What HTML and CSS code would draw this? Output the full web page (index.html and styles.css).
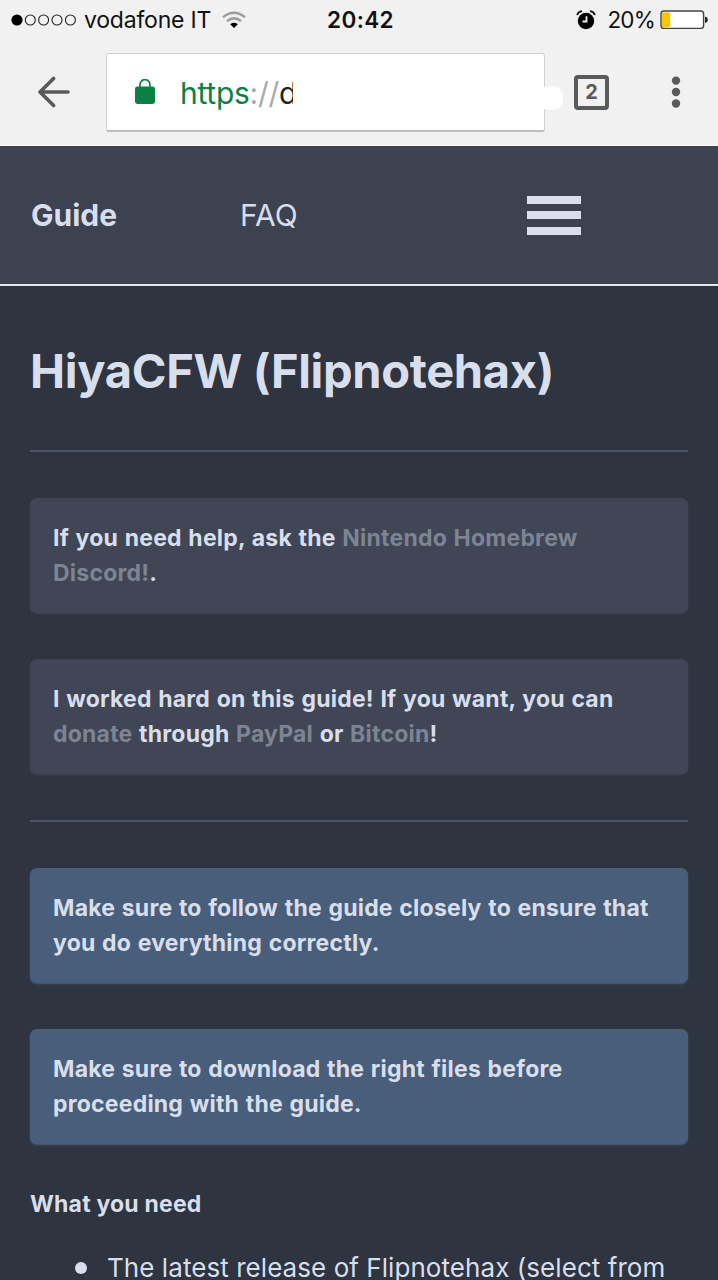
FILE: index.html
```html
<!DOCTYPE html>
<html lang="en">
<head>
<meta charset="utf-8">
<title>HiyaCFW (Flipnotehax)</title>
<link rel="stylesheet" href="styles.css">
</head>
<body>
<div class="screen">
  <header class="chrome">
    <div class="status">
      <div class="status-left">
        <svg class="signal" width="66" height="14" viewBox="0 0 66 14"><circle cx="6" cy="7" r="5.6"/><g fill="none" stroke="#222" stroke-width="1.1"><circle cx="19.3" cy="7" r="5"/><circle cx="32.6" cy="7" r="5"/><circle cx="46" cy="7" r="5"/><circle cx="59.4" cy="7" r="5"/></g></svg>
        <span class="carrier">vodafone IT</span>
        <svg class="wifi" width="24" height="18" viewBox="0 0 24 18"><g fill="none" stroke="#9b9b9b" stroke-width="2.4"><path d="M1 6.3Q12-2.7 23 6.3"/><path d="M5 10.2Q12 4.4 19 10.2"/></g><path d="M8.2 13.3Q12 10.4 15.8 13.3L12 17z"/></svg>
      </div>
      <time class="clock">20:42</time>
      <div class="status-right">
        <svg class="alarm" width="20" height="20" viewBox="0 0 20 20"><circle cx="10" cy="11" r="8.2"/><path d="M1 5Q2.4 1.7 6 1.2M19 5Q17.6 1.7 14 1.2" fill="none" stroke="#111" stroke-width="1.8"/><path d="M10.5 6.3V11.5H6.5" fill="none" stroke="#f1f1f1" stroke-width="1.8"/></svg>
        <span class="percent">20%</span>
        <svg class="battery" width="48" height="20" viewBox="0 0 48 20"><rect x="1" y="1" width="42.6" height="17.4" rx="3" fill="#fff" stroke="#444" stroke-width="1.4"/><path d="M3 2.5H10.2V17H3a1 1 0 0 1-1-1V3.5a1 1 0 0 1 1-1z" fill="#fdc500"/><path d="M45 6.8h1q1.8.6 1.8 3t-1.8 3h-1z" fill="#222"/></svg>
      </div>
    </div>
    <div class="toolbar">
      <svg class="back" width="32" height="32" viewBox="0 0 32 32"><path d="M30 16H2.5M15.6 2.5L2 16l13.6 13.5" fill="none" stroke="#5a5a5a" stroke-width="3.6" stroke-linecap="round" stroke-linejoin="round"/></svg>
      <div class="address">
        <svg class="lock" width="20" height="26" viewBox="0 0 20 26"><rect y="7.6" width="20" height="17.4" rx="2.4" fill="#0b8043"/><path d="M5 9V5.6a5 5 0 0 1 10 0V9" fill="none" stroke="#0b8043" stroke-width="1.7"/></svg>
        <span class="url"><span class="scheme">https</span><span class="slashes">://</span><span class="host">d</span></span>
        <i class="nub"></i>
      </div>
      <div class="tabs">2</div>
      <svg class="more" width="10" height="32" viewBox="0 0 10 32" fill="#5a5a5a"><circle cx="5" cy="4.6" r="4.2"/><circle cx="5" cy="16" r="4.2"/><circle cx="5" cy="27.5" r="4.2"/></svg>
    </div>
  </header>
  <nav class="masthead">
    <a class="guide">Guide</a>
    <a class="faq">FAQ</a>
    <div class="menu"><i></i><i></i><i></i></div>
  </nav>
  <main class="content">
    <h1>HiyaCFW (Flipnotehax)</h1>
    <hr>
    <p class="notice n1">If you need help, ask the <a>Nintendo Homebrew<br>Discord!</a>.</p>
    <p class="notice n2">I worked hard on this guide! If you want, you can<br><a>donate</a> through <a>PayPal</a> or <a>Bitcoin</a>!</p>
    <hr>
    <p class="notice info">Make sure to follow the guide closely to ensure that<br>you do everything correctly.</p>
    <p class="notice info">Make sure to download the right files before<br>proceeding with the guide.</p>
    <h2>What you need</h2>
    <ul><li>The latest release of Flipnotehax (select from</li></ul>
  </main>
</div>
</body>
</html>
```
FILE: styles.css
```css
* { box-sizing: border-box; }
body { margin: 0; background: #2e3440; font-family: Inter, "Liberation Sans", sans-serif; }
svg { display: block; flex: none; }
.screen { width: 718px; height: 1280px; overflow: hidden; white-space: nowrap; }

.chrome { height: 146px; background: #f1f1f1; border-bottom: 1px solid #fafafa; }
.status { height: 53px; padding: 6px 10px 0 11px; display: grid; grid-template-columns: 1fr auto 1fr; color: #111; font-size: 23px; line-height: 28px; }
.status-left, .status-right { display: flex; align-items: center; height: 28px; }
.status-right { justify-content: flex-end; }
.carrier { margin-left: 7px; letter-spacing: -.2px; }
.wifi { margin-left: 11px; }
.clock { padding-left: 2px; font-size: 22.5px; font-weight: 600; letter-spacing: .4px; }
.alarm { margin-right: -2px; }
.percent { margin: 0 5px 0 13px; font-size: 22.5px; letter-spacing: -.8px; }

.toolbar { display: flex; align-items: center; height: 78px; padding: 0 37px 0 38px; }
.address { position: relative; display: flex; align-items: center; width: 439px; height: 79px; margin-left: 36px; padding-left: 28px; background: #fff; border: 1px solid #d0d0d0; border-bottom: 2px solid #bdbdbd; border-radius: 3px; }
.url { margin-left: 25px; padding-top: 2px; font-size: 30px; line-height: 36px; letter-spacing: -.25px; }
.scheme { color: #0b8043; }
.slashes { color: #aaa; }
.host { display: inline-block; width: 14px; overflow: hidden; vertical-align: top; color: #222; }
.nub { position: absolute; left: 431px; top: 32px; width: 25px; height: 24px; border-radius: 10px; background: #fff; }
.tabs { width: 35px; height: 35px; margin-left: 29px; border: 4px solid #5a5a5a; border-radius: 4px; color: #5a5a5a; font-size: 20px; font-weight: 700; line-height: 26px; text-align: center; }
.more { margin-left: auto; }

.masthead { display: flex; align-items: center; height: 140px; padding: 0 137.5px 0 31px; background: #3d4251; border-bottom: 2px solid #e3e7f2; color: #d8deec; font-size: 30px; line-height: 36px; }
.guide { width: 209px; font-weight: 700; }
.faq { font-weight: 400; letter-spacing: 0; }
.menu { display: grid; gap: 7.5px; width: 54px; margin: 0 0 0 auto; }
.menu i { height: 8px; background: #d8deec; }

.content { padding: 50px 30px 0; color: #d8deec; }
h1 { margin: 0; font-size: 47px; line-height: 70px; font-weight: 700; letter-spacing: -.32px; }
hr { height: 2px; margin: 44px 0 46px; border: 0; background: #4b5263; }
.notice { height: 115px; margin: 0 0 46px; padding: 23px 23px; border-radius: 7px; background: #404656; box-shadow: 0 1px 2px #404656; font-size: 23px; line-height: 35px; font-weight: 700; letter-spacing: .22px; word-spacing: .9px; }
.notice a { color: #7d8494; }
.notice.n2 + hr { margin: 46px 0; }
.info { background: #495e7b; box-shadow: 0 1px 2px #495e7b; }
h2 { margin: -45px 0 0; padding-top: 42px; font-size: 23px; line-height: 35px; font-weight: 700; letter-spacing: .2px; }
ul { margin: 26px 0 0; padding: 0; list-style: none; }
li { display: flex; align-items: center; padding-left: 45px; gap: 20px; font-size: 26px; line-height: 40px; font-weight: 400; letter-spacing: .06px; }
li::before { content: ""; width: 12px; height: 12px; border-radius: 50%; background: #d8deec; }
```
